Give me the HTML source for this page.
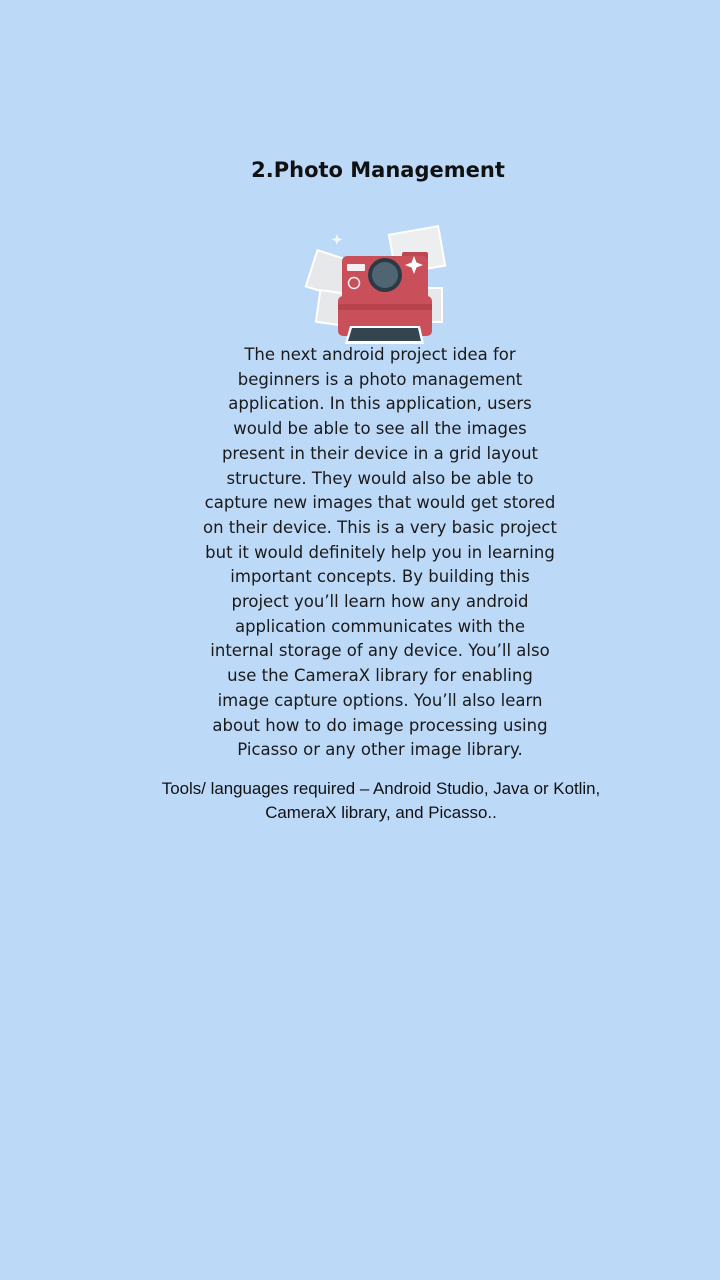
<!DOCTYPE html>
<html><head><meta charset="utf-8"><style>
html,body{margin:0;padding:0;}
body{width:720px;height:1280px;background:#bdd9f8;position:relative;overflow:hidden;}
.t{position:absolute;left:0;width:756px;text-align:center;font-family:"DejaVu Sans","Liberation Sans",sans-serif;font-weight:bold;font-size:21px;top:158px;color:#111;}
.b{position:absolute;left:0;width:760px;text-align:center;font-family:"DejaVu Sans",sans-serif;font-size:16.5px;line-height:24.7px;top:343px;color:#1a1a1a;}
.r{position:absolute;left:0;width:762px;text-align:center;font-family:"Liberation Sans",sans-serif;font-size:16.9px;line-height:24px;top:777px;color:#111;}
</style></head><body>
<div class="t">2.Photo Management</div>
<svg style="position:absolute;left:300px;top:220px" width="160" height="130" viewBox="0 0 160 130">
<g transform="rotate(-10 118 30)"><rect x="92" y="10" width="50" height="40" fill="#eceef0" stroke="#fff" stroke-width="2"/></g>
<g transform="rotate(18 30 50)"><rect x="12" y="35" width="40" height="38" fill="#e6e8ea" stroke="#fff" stroke-width="2"/></g>
<rect x="18" y="72" width="30" height="32" fill="#e6e8ea" stroke="#fff" stroke-width="2" transform="rotate(8 33 88)"/>
<rect x="120" y="68" width="22" height="34" fill="#e6e8ea" stroke="#fff" stroke-width="2"/>
<path d="M37 14 l1.5 4 4 1.5 -4 1.5 -1.5 4 -1.5 -4 -4 -1.5 4 -1.5z" fill="#fff" opacity=".8"/>
<rect x="102" y="32" width="26" height="10" rx="2" fill="#b94853"/>
<rect x="42" y="36" width="86" height="46" rx="5" fill="#c9505b"/>
<rect x="38" y="76" width="94" height="40" rx="5" fill="#c9505b"/>
<rect x="38" y="84" width="94" height="6" fill="#b5444f"/>
<rect x="47" y="44" width="18" height="7" rx="1" fill="#f4f0f0"/>
<circle cx="54" cy="63" r="5.5" fill="none" stroke="#f4f0f0" stroke-width="1.5"/>
<circle cx="85" cy="55" r="17" fill="#2b3a44"/>
<circle cx="85" cy="55" r="13" fill="#4f6672"/>
<path d="M114 36 l2.5 6.5 6.5 2.5 -6.5 2.5 -2.5 6.5 -2.5 -6.5 -6.5 -2.5 6.5 -2.5z" fill="#fff"/>
<path d="M45 124 L50 106 L120 106 L124 124 Z" fill="#fff"/>
<path d="M48 121 L52 108 L118 108 L121 121 Z" fill="#33454f"/>
</svg>
<div class="b">The next android project idea for<br>beginners is a photo management<br>application. In this application, users<br>would be able to see all the images<br>present in their device in a grid layout<br>structure. They would also be able to<br>capture new images that would get stored<br>on their device. This is a very basic project<br>but it would definitely help you in learning<br>important concepts. By building this<br>project you’ll learn how any android<br>application communicates with the<br>internal storage of any device. You’ll also<br>use the CameraX library for enabling<br>image capture options. You’ll also learn<br>about how to do image processing using<br>Picasso or any other image library.</div>
<div class="r">Tools/ languages required – Android Studio, Java or Kotlin,<br>CameraX library, and Picasso..</div>
</body></html>
